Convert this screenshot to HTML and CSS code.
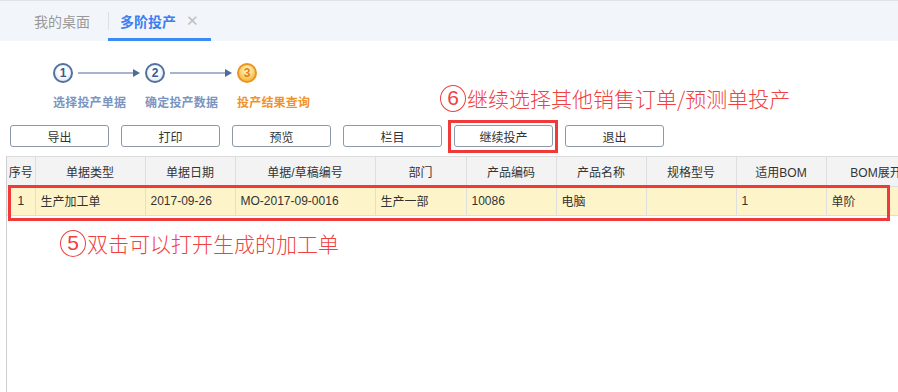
FILE: index.html
```html
<!DOCTYPE html>
<html lang="zh-CN">
<head>
    <meta charset="UTF-8">
    <title>多阶投产</title>
    <link rel="stylesheet" href="styles.css">
</head>
<body>

<div class="tabs">
    <div class="tab">我的桌面</div>
    <div class="tab active">多阶投产<span class="close">✕</span></div>
</div>

<div class="main">
    <!-- 步骤条 -->
    <div class="steps">
        <div class="step">
            <div class="step-top">
                <span class="num">1</span>
                <svg class="arrow" width="62" height="10" viewBox="0 0 62 10"><line x1="0" y1="5" x2="56" y2="5" stroke="#4f6b98" stroke-width="1.2"/><polygon points="55,1 62,5 55,9" fill="#4f6b98"/></svg>
            </div>
            <div class="label">选择投产单据</div>
        </div>
        <div class="step">
            <div class="step-top">
                <span class="num">2</span>
                <svg class="arrow" width="62" height="10" viewBox="0 0 62 10"><line x1="0" y1="5" x2="56" y2="5" stroke="#4f6b98" stroke-width="1.2"/><polygon points="55,1 62,5 55,9" fill="#4f6b98"/></svg>
            </div>
            <div class="label">确定投产数据</div>
        </div>
        <div class="step current">
            <div class="step-top">
                <span class="num">3</span>
            </div>
            <div class="label">投产结果查询</div>
        </div>
    </div>

    <div class="note note6"><span class="circ">6</span>继续选择其他销售订单/预测单投产</div>

    <!-- 工具栏 -->
    <div class="toolbar">
        <button class="btn">导出</button>
        <button class="btn">打印</button>
        <button class="btn">预览</button>
        <button class="btn">栏目</button>
        <button class="btn mark">继续投产</button>
        <button class="btn">退出</button>
    </div>

    <!-- 表格 -->
    <div class="grid">
        <table>
            <colgroup>
                <col style="width:28px">
                <col style="width:110px">
                <col style="width:90px">
                <col style="width:140px">
                <col style="width:91px">
                <col style="width:90px">
                <col style="width:90px">
                <col style="width:90px">
                <col style="width:90px">
                <col style="width:100px">
            </colgroup>
            <thead>
                <tr>
                    <th>序号</th>
                    <th>单据类型</th>
                    <th>单据日期</th>
                    <th>单据/草稿编号</th>
                    <th>部门</th>
                    <th>产品编码</th>
                    <th>产品名称</th>
                    <th>规格型号</th>
                    <th>适用BOM</th>
                    <th>BOM展开</th>
                </tr>
            </thead>
            <tbody>
                <tr>
                    <td class="idx">1</td>
                    <td>生产加工单</td>
                    <td>2017-09-26</td>
                    <td>MO-2017-09-0016</td>
                    <td>生产一部</td>
                    <td>10086</td>
                    <td>电脑</td>
                    <td></td>
                    <td>1</td>
                    <td>单阶</td>
                </tr>
            </tbody>
        </table>
        <div class="row-mark"></div>
        <div class="note note5"><span class="circ">5</span>双击可以打开生成的加工单</div>
    </div>
</div>

</body>
</html>
```

FILE: styles.css
```css
html, body {
    margin: 0;
    height: 100%;
    overflow: hidden;
}
body {
    background-color: #fff;
    color: #333;
    font-family: "Liberation Sans", "Noto Sans CJK SC", sans-serif;
    font-size: 12px;
}

/* 顶部标签 */
.tabs {
    display: flex;
    height: 41px;
    padding-left: 16px;
    background-color: #f2f6fb;
    border-top: 1px solid #dfe3e8;
    box-sizing: border-box;
}
.tab {
    position: relative;
    display: flex;
    align-items: center;
    padding: 0 18px;
    font-size: 14px;
    color: #999;
}
.tab.active {
    padding: 0 12px;
    color: #3d7ff0;
    font-weight: bold;
    box-shadow: inset 0 -3px 0 #3a8bf2;
}
.tab.active::before {
    content: "";
    position: absolute;
    left: 0;
    top: 11px;
    height: 18px;
    border-left: 1px solid #dcdfe4;
}
.close {
    margin-left: 10px;
    font-size: 15px;
    font-weight: normal;
    color: #bcc0c5;
}

.main {
    position: relative;
}

/* 步骤条 */
.steps {
    display: grid;
    grid-template-columns: 92px 92px 92px;
    padding: 22px 0 0 53px;
}
.step-top {
    display: flex;
    align-items: center;
}
.num {
    width: 20px;
    height: 20px;
    box-sizing: border-box;
    border: 2px solid #52719f;
    border-radius: 50%;
    background: radial-gradient(circle at 50% 40%, #fff 30%, #d6e0ef 100%);
    color: #3a5a8c;
    font-weight: bold;
    font-size: 12px;
    line-height: 16px;
    text-align: center;
}
.arrow {
    margin-left: 5px;
}
.label {
    margin-top: 12px;
    font-weight: bold;
    color: #7b95c0;
    line-height: 16px;
    letter-spacing: 0.2px;
}
.current .num {
    border-color: #ec9422;
    background: radial-gradient(circle at 50% 35%, #fff2b8 15%, #f6b43c 80%, #f09a22 100%);
    color: #e67f10;
}
.current .label {
    color: #f0932b;
}

/* 标注 */
.note {
    position: absolute;
    display: flex;
    align-items: center;
    color: #f04141;
    font-family: "Noto Sans CJK SC", sans-serif;
    font-size: 21px;
    font-weight: 300;
    white-space: nowrap;
}
.circ {
    width: 26px;
    height: 27px;
    box-sizing: border-box;
    border: 1.5px solid #f04141;
    border-radius: 50%;
    font-family: "Liberation Sans", sans-serif;
    font-size: 21px;
    line-height: 24px;
    text-align: center;
    margin-right: 1px;
}
.note6 {
    top: 42px;
    left: 440px;
}
.note5 {
    top: 71px;
    left: 53px;
}

/* 工具栏 */
.toolbar {
    display: flex;
    gap: 12px;
    padding: 14px 0 0 10px;
}
.btn {
    position: relative;
    width: 99px;
    height: 22px;
    padding: 0;
    border: 1px solid #8d99a8;
    border-radius: 3px;
    background-color: #fff;
    color: #333;
    font-family: "Liberation Sans", "Noto Sans CJK SC", sans-serif;
    font-size: 12px;
}
.btn.mark::after {
    content: "";
    position: absolute;
    top: -6px;
    left: -7px;
    right: -6px;
    bottom: -7px;
    border: 3px solid #f03a3a;
}

/* 表格 */
.grid {
    position: relative;
    margin: 9px 0 0 6px;
    height: 236px;
    border-left: 1px solid #cfcfcf;
    border-top: 1px solid #dcdcdc;
}
table {
    table-layout: fixed;
    border-collapse: collapse;
    width: 919px;
}
th, td {
    height: 29px;
    padding: 0 5px;
    border-right: 1px solid #dedede;
    border-bottom: 1px solid #dedede;
    white-space: nowrap;
    overflow: hidden;
    box-sizing: border-box;
}
th {
    background-color: #f3f3f3;
    font-weight: normal;
    text-align: center;
}
td {
    background-color: #fdf5c9;
    text-align: left;
}
td.idx, th:first-child {
    padding: 0;
    text-align: center;
}
.row-mark {
    position: absolute;
    top: 28px;
    left: 1px;
    width: 876px;
    height: 30px;
    border: 3px solid #f03a3a;
}
```
